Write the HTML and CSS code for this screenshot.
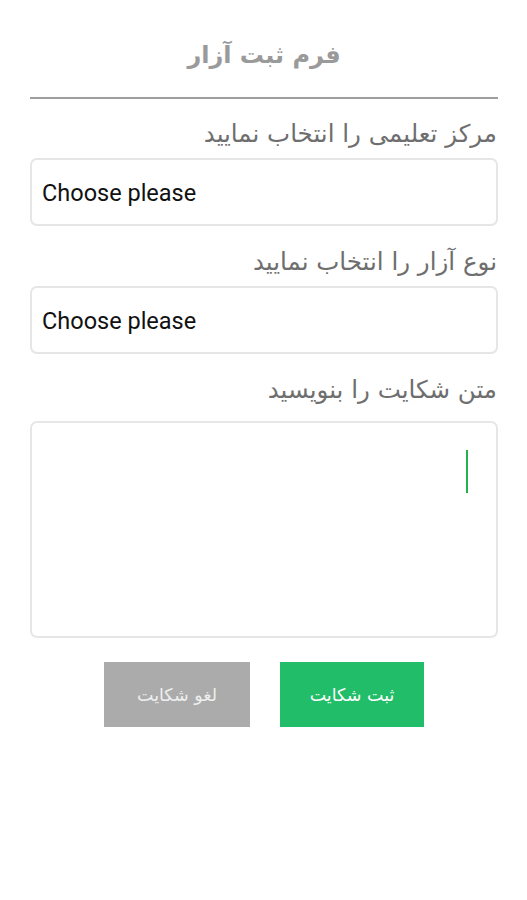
FILE: index.html
```html
<!DOCTYPE html>
<html lang="fa" dir="rtl">
<head>
<meta charset="utf-8">
<title>فرم ثبت آزار</title>
<link rel="stylesheet" href="styles.css">
</head>
<body>
<main class="page">
  <h1 class="title">فرم ثبت آزار</h1>
  <hr class="rule">
  <label class="label">مرکز تعلیمی را انتخاب نمایید</label>
  <div class="select" dir="ltr">Choose please</div>
  <label class="label">نوع آزار را انتخاب نمایید</label>
  <div class="select" dir="ltr">Choose please</div>
  <label class="label">متن شکایت را بنویسید</label>
  <div class="textarea"><span class="caret"></span></div>
  <div class="actions">
    <button class="btn btn-primary">ثبت شکایت</button>
    <button class="btn btn-cancel">لغو شکایت</button>
  </div>
</main>
</body>
</html>
```
FILE: styles.css
```css
* { box-sizing: border-box; }
html, body { margin: 0; padding: 0; background: #fff; }
body {
  font-family: "DejaVu Sans", "Noto Sans", sans-serif;
  width: 527px;
}
.page {
  padding: 0 29px 0 30px;
  display: flex;
  flex-direction: column;
}
.title {
  margin: 37px 0 0;
  text-align: center;
  font-size: 24px;
  font-weight: bold;
  color: #9a9a9a;
  line-height: 36px;
}
.rule {
  margin: 24px 0 0;
  border: 0;
  height: 2px;
  background: #9e9e9e;
}
.label {
  display: block;
  text-align: right;
  font-size: 24.5px;
  font-weight: normal;
  color: #6e6e6e;
  line-height: 30px;
  margin-top: 21px;
  padding-right: 1px;
}
.rule + .label { margin-top: 20px; }
.select {
  margin-top: 9px;
  height: 68px;
  border: 2px solid #e6e6e6;
  border-radius: 7px;
  display: flex;
  align-items: center;
  padding-left: 10px;
  padding-top: 1px;
  font-family: Roboto, "Liberation Sans", sans-serif;
  font-size: 23.5px;
  color: #111;
}
.textarea {
  margin-top: 16px;
  height: 217px;
  border: 2px solid #e6e6e6;
  border-radius: 7px;
  position: relative;
}
.caret {
  position: absolute;
  top: 27px;
  right: 28px;
  width: 2px;
  height: 43px;
  background: #22b14c;
}
.actions {
  margin-top: 24px;
  display: flex;
  justify-content: center;
  gap: 30px;
}
.btn {
  border: 0;
  height: 65px;
  color: #fff;
  font-family: "DejaVu Sans", sans-serif;
  font-size: 17.5px;
}
.btn-primary { background: #22bd68; width: 144px; }
.btn-cancel { background: #ababab; width: 146px; color: #eee; }
```
